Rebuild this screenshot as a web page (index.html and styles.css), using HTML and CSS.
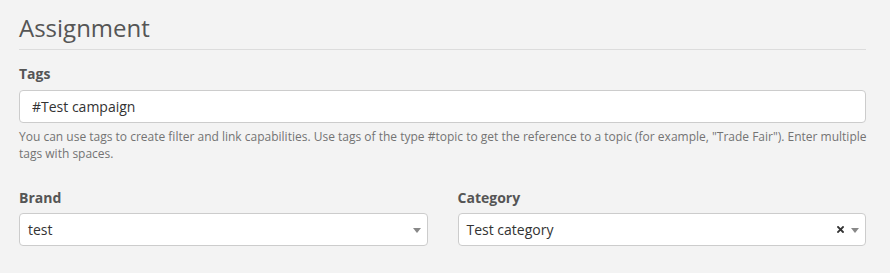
FILE: index.html
```html
<!DOCTYPE html>
<html lang="en">
<head>
    <meta charset="UTF-8">
    <title>Assignment</title>
    <link rel="stylesheet" href="styles.css">
</head>
<body>
    <div class="container">
        <h1 class="section-title">Assignment</h1>

        <label class="field-label" for="tags">Tags</label>
        <input id="tags" class="text-input" type="text" value="#Test campaign">
        <p class="help-text">You can use tags to create filter and link capabilities. Use tags of the type #topic to get the reference to a topic (for example, "Trade Fair"). Enter multiple tags with spaces.</p>

        <div class="row">
            <div class="col">
                <div class="field-label">Brand</div>
                <div class="select-box">
                    <span class="select-value">test</span>
                    <span class="select-arrow"></span>
                </div>
            </div>
            <div class="col">
                <div class="field-label">Category</div>
                <div class="select-box">
                    <span class="select-value">Test category</span>
                    <svg class="select-clear" width="7" height="7" viewBox="0 0 7 7">
                        <path d="M1 1L6 6M6 1L1 6" stroke="#333333" stroke-width="1.8" stroke-linecap="square"/>
                    </svg>
                    <span class="select-arrow"></span>
                </div>
            </div>
        </div>
    </div>
</body>
</html>
```

FILE: styles.css
```css
/* General Styling */
body {
    font-family: 'Open Sans', sans-serif;
    margin: 0;
    padding: 0;
    background: #f3f3f3;
    color: #555555;
}
.container {
    width: 847px;
    margin-left: 19px;
}
.section-title {
    font-size: 24px;
    font-weight: 400;
    line-height: 30px;
    color: #555555;
    margin: 0;
    padding: 13px 0 6px 0;
    border-bottom: 1px solid #dcdcdc;
}
.field-label {
    display: block;
    font-size: 14px;
    font-weight: 700;
    line-height: 20px;
    color: #555555;
}
label.field-label {
    margin-top: 14px;
}
.text-input {
    display: block;
    box-sizing: border-box;
    width: 100%;
    height: 33px;
    margin: 6px 0 0 0;
    padding: 0 12px;
    font-family: 'Open Sans', sans-serif;
    font-size: 14px;
    color: #333333;
    background: #ffffff;
    border: 1px solid #cccccc;
    border-radius: 4px;
    outline: none;
}
.help-text {
    margin: 5px -20px 0 0;
    font-size: 12px;
    line-height: 17px;
    color: #737373;
}
.row {
    display: grid;
    grid-template-columns: 1fr 1fr;
    column-gap: 30px;
    margin-top: 26px;
}
.select-box {
    box-sizing: border-box;
    height: 33px;
    margin-top: 5px;
    padding: 0 6px 0 8px;
    display: flex;
    align-items: center;
    background: #ffffff;
    border: 1px solid #cccccc;
    border-radius: 4px;
    font-size: 14px;
    color: #333333;
}
.select-value {
    flex: 1;
}
.select-clear {
    margin-right: 7px;
}
.select-arrow {
    width: 0;
    height: 0;
    border-top: 5px solid #888888;
    border-left: 4px solid transparent;
    border-right: 4px solid transparent;
    margin-top: 1px;
}
```
